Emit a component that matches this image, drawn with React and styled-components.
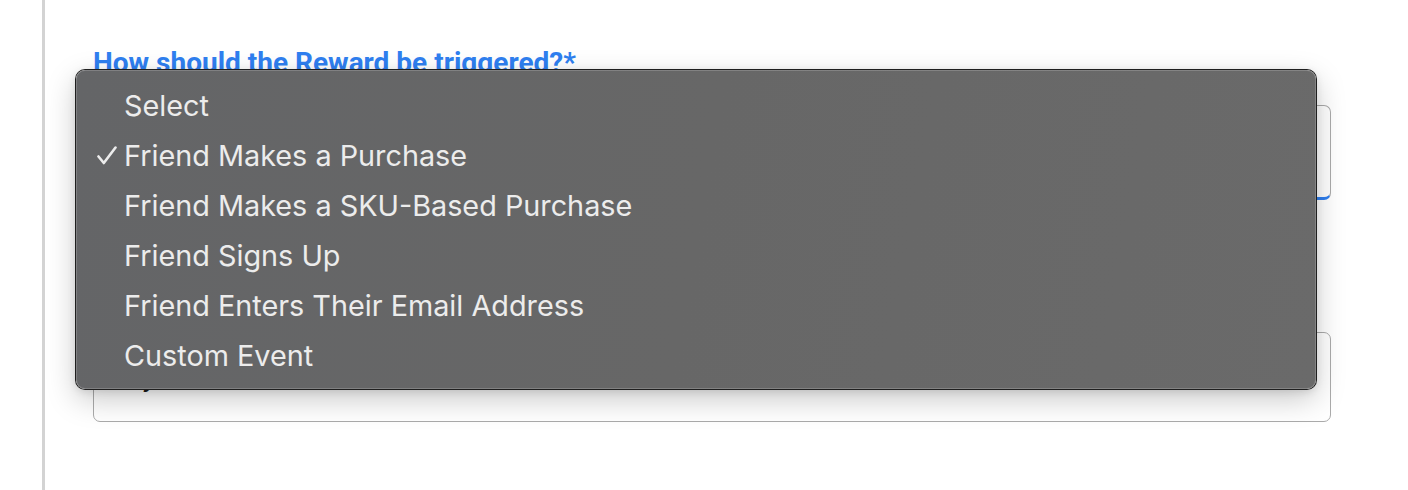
import React from 'react'
import styled, { createGlobalStyle } from 'styled-components'

const options = [
  'Select',
  'Friend Makes a Purchase',
  'Friend Makes a SKU-Based Purchase',
  'Friend Signs Up',
  'Friend Enters Their Email Address',
  'Custom Event',
]

const GlobalStyle = createGlobalStyle`
  html, body {
    margin: 0;
    padding: 0;
    background: #ffffff;
  }
  body {
    font-family: 'Roboto', 'Liberation Sans', sans-serif;
  }
`

const Page = styled.div`
  position: relative;
  display: flex;
  height: 490px;
  overflow: hidden;
`

const Rail = styled.div`
  width: 42px;
  flex-shrink: 0;
  border-right: 3px solid #d3d3d3;
`

const Content = styled.div`
  flex: 1;
  padding: 47px 0 0 48px;
  display: flex;
  flex-direction: column;
`

const Label = styled.label`
  font-family: 'Roboto', 'Liberation Sans', sans-serif;
  font-weight: 700;
  font-size: 28px;
  line-height: 32px;
  height: 32px;
  color: #2f7ff0;
`

const Field = styled.div`
  box-sizing: border-box;
  width: 1238px;
  height: ${p => p.$h}px;
  margin-top: ${p => p.$gap}px;
  border: 1px solid #ababab;
  border-bottom: ${p => (p.$focus ? '3px solid #2f7ff0' : '1px solid #ababab')};
  border-radius: 7px;
  display: flex;
  align-items: center;
  padding-left: 17px;
  font-family: 'Inter', 'Liberation Sans', sans-serif;
  font-size: 26px;
  color: #1a1a1a;
`

const Menu = styled.ul`
  position: absolute;
  left: 76px;
  top: 70px;
  width: 1240px;
  box-sizing: border-box;
  margin: 0;
  padding: 10px 0 9px;
  list-style: none;
  border-radius: 9px;
  background: linear-gradient(100deg, #646567 0%, #676767 50%, #6a6a6a 100%);
  box-shadow:
    inset 0 0 0 1px rgba(255, 255, 255, 0.18),
    0 0 0 1px #1f1f1f,
    0 10px 30px rgba(0, 0, 0, 0.22),
    0 2px 8px rgba(0, 0, 0, 0.12);
`

const Option = styled.li`
  position: relative;
  height: 50px;
  display: flex;
  align-items: center;
  padding-left: 48px;
  font-family: 'Inter', 'Noto Sans', sans-serif;
  font-size: 28.8px;
  color: #ececec;
`

const Check = styled.svg`
  position: absolute;
  left: 21px;
  top: 16px;
  width: 20px;
  height: 19px;
`

export default function App() {
  return (
    <Page>
      <GlobalStyle />
      <Rail />
      <Content>
        <Label>How should the Reward be triggered?*</Label>
        <Field $h={95} $gap={26} $focus />
        <Field $h={90} $gap={132}>Pay</Field>
      </Content>
      <Menu>
        {options.map((o, i) => (
          <Option key={o}>
            {i === 1 && (
              <Check viewBox="0 0 20 19" fill="none">
                <path d="M1.5 10.5 L6.8 17 L18.5 1.5" stroke="#ececec" strokeWidth="2.6" strokeLinecap="round" strokeLinejoin="round" />
              </Check>
            )}
            {o}
          </Option>
        ))}
      </Menu>
    </Page>
  )
}
